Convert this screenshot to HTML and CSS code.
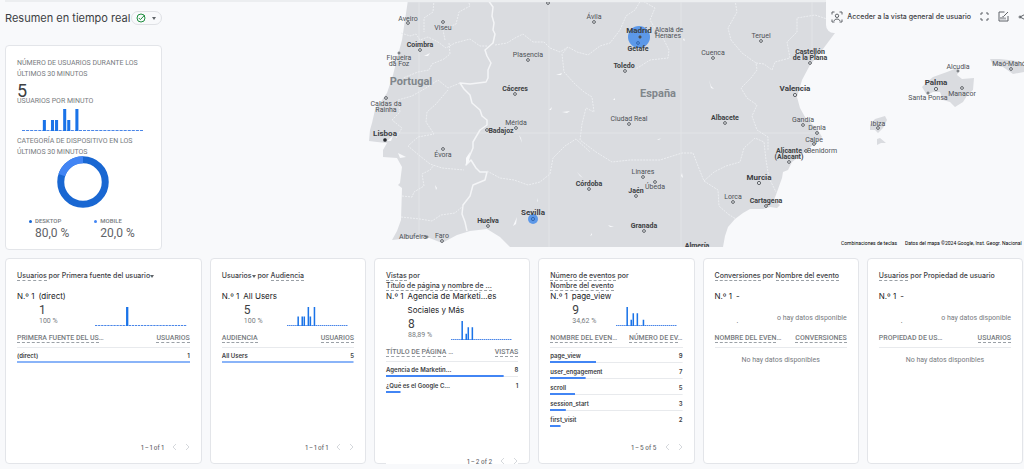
FILE: index.html
```html
<!DOCTYPE html>
<html lang="es">
<head>
  <meta charset="UTF-8">
  <meta name="viewport" content="width=device-width, initial-scale=1.0">
  <title>Resumen en tiempo real</title>
  <link rel="stylesheet" href="styles.css">
</head>
<body>
  <!-- Mapa y resumen -->
  <section class="hero">
    <svg class="map" viewBox="0 0 1024 247" preserveAspectRatio="xMaxYMin slice" role="img" aria-label="Mapa de usuarios">
      <g class="land">
        <path d="M408 0L405 20 402 40 398 55 393 75 387 93 375 110 372 123 370 130 369 141 377 142 387 143 383 150 383 157 397 158 402 167 400 183 398 185 402 188 401 220 397 231 392 240 410 238 427 237 442 243 457 235 470 231 487 229 500 237 510 247H723L725 236 728 227 735 219 743 213 750 209 763 209 770 207 777 208 780 205 774 200 777 192 782 178 783 172 788 170 792 162 805 152 813 145 822 137 818 130 810 122 805 117 800 108 797 97 802 80 810 65 820 53 835 33 850 0Z"/>
        <path d="M922 87L926 83 933 77 947 72 957 68 959 71 957 75 962 79 974 78 973 90 968 94 963 102 955 107 950 102 943 100 940 92 933 92 927 95Z"/>
        <path d="M990 59L1000 59 1017 61 1024 65V72L1013 74 1003 67 993 65Z"/>
        <path d="M870 125L875 119 885 116 887 120 883 128 878 133 875 130 870 130Z"/>
        <path d="M877 139L880 138 886 143 881 143 877 145Z"/>
      </g>
      <g class="grid">
        <path d="M419 0V238M549 0V247M681 0V247M812 0V60M380 133H820M408 2H825"/>
      </g>
      <path class="border" d="M488 0L493 7 492 16 494 23 493 30 495 34 493 43 485 50 487 56 491 63 488 70 488 78 486 82 470 84 460 83 464 89 470 95 472 103 480 110 482 116 487 120 487 125 480 130 473 142 473 148 470 155 466 165 471 160 476 168 480 172 487 172 485 180 473 185 470 196 463 205 462 214 465 222 467 231"/>
      <g class="region">
        <path d="M401 33L410 36 416 34 420 40 428 37 438 42 446 48 455 43 470 39 480 46 487 46"/>
        <path d="M434 0L433 12 424 18 424 32M468 0L470 6 459 12 456 24 443 30 445 40"/>
        <path d="M449 43L450 54 444 59 432 64 429 70 418 72 403 78"/>
        <path d="M460 83L448 88 438 80 426 88 412 96 398 100 400 112 392 120 402 128 396 138"/>
        <path d="M448 90L436 104 427 112 426 122 434 134 418 137 408 146 420 156 430 164 442 168 464 170"/>
        <path d="M402 196L412 197 414 192 424 186 422 174 430 170 434 165"/>
        <path d="M401 217L420 219 432 221 441 215 455 213 463 206"/>
        <path d="M495 45L507 43 515 38 523 34 533 42 544 42 550 48 560 52 568 47 577 52 588 55 600 46 610 43 620 30 626 16 635 10 641 0"/>
        <path d="M641 0L655 8 650 20 656 30 664 40 669 50 668 58 650 60 636 69"/>
        <path d="M568 47L562 54 564 72 575 84 584 92 592 97 594 112 586 108 582 124 580 140 596 152 612 162 630 160 660 160 682 153 693 153 698 166 704 181"/>
        <path d="M487 171L500 178 514 180 528 185 540 182 550 174 553 158 565 146 576 139 590 152"/>
        <path d="M735 0L737 12 728 28 731 40 742 53 756 63 757 70 751 78 741 88 747 98 757 105 752 116 757 130 768 137 768 150"/>
        <path d="M756 63L764 64 772 70 775 62 790 58 787 42 797 32 797 18 815 15 830 20"/>
        <path d="M704 181L714 172 726 166 740 162 744 148 755 138 764 142 766 160 769 178 776 192"/>
        <path d="M704 181L718 190 719 206 728 214 736 219"/>
      </g>
      <g class="water">
        <path d="M556 75l6-2-1 2zM549 110l3-3-1 3zM519 135l3 8-1-5zM562 112l8-1-3 2zM709 80l2 6 3 3-3-1zM466 158l4-6-1 9-3 4zM387 141l6-5-2 5zM398 153l8 4-6 1zM613 100l2-2 0 2zM682 173l1 5-2-2zM608 225l6 2-4 0zM590 236l2-3 0 2zM424 56l6-3-2 3zM435 185l2 3-1 2zM537 198l1 4-1-1zM513 226l4-9-1 7zM577 172l6 6-3-2zM657 140l4-2-2 2zM684 38l1 3-2-1zM795 104l1 3z"/>
      </g>
      <circle class="hit" cx="639" cy="37" r="11"/>
      <circle class="hit" cx="533" cy="219" r="5"/>
      <g class="dots">
        <circle cx="408" cy="23" r="1.4"/><circle cx="443" cy="22" r="1.4"/><circle cx="420" cy="50" r="1.4"/>
        <circle cx="399" cy="53" r="1"/><circle cx="386" cy="98" r="1.4"/><circle cx="548" cy="3" r="1.4"/>
        <circle cx="528" cy="60" r="1.4"/><circle cx="515" cy="94" r="1.4"/><circle cx="516" cy="128" r="1.4"/>
        <circle cx="487" cy="130" r="1.4"/><circle cx="443" cy="149" r="1.4"/><circle cx="488" cy="226" r="1.4"/>
        <circle cx="442" cy="241" r="1.4"/><circle cx="427" cy="237" r="1"/><circle class="over" cx="533" cy="219" r="1.6"/>
        <circle cx="589" cy="189" r="1.4"/><circle cx="594" cy="22" r="1.4"/><circle class="over" cx="638" cy="43" r="1.4"/>
        <circle cx="656" cy="33" r="1"/><circle cx="625" cy="71" r="1.4"/><circle cx="713" cy="58" r="1.4"/>
        <circle cx="761" cy="41" r="1.4"/><circle cx="810" cy="63" r="1.4"/><circle cx="795" cy="95" r="1.6"/>
        <circle cx="629" cy="124" r="1.4"/><circle cx="725" cy="123" r="1.4"/><circle cx="803" cy="125" r="1.4"/>
        <circle cx="817" cy="133" r="1.4"/><circle cx="814" cy="144" r="1.4"/><circle cx="806" cy="151" r="1.4"/>
        <circle cx="789" cy="162" r="1.4"/><circle cx="759" cy="183" r="1.6"/><circle cx="643" cy="177" r="1.4"/>
        <circle cx="655" cy="182" r="1.4"/><circle cx="636" cy="196" r="1.4"/><circle cx="644" cy="231" r="1.4"/>
        <circle cx="733" cy="202" r="1.4"/><circle cx="766" cy="206" r="1.4"/><circle cx="936" cy="89" r="1.6"/>
        <circle cx="928" cy="93" r="1"/><circle cx="962" cy="88" r="1.4"/><circle cx="958" cy="71" r="1"/>
        <circle cx="1011" cy="69" r="1.4"/><circle cx="878" cy="128" r="1.4"/>
        <circle class="capital" cx="385" cy="140" r="1.6"/><circle class="capital" cx="640" cy="37" r="1.2"/>
      </g>
      <g class="town">
        <text x="408" y="21">Aveiro</text><text x="443" y="30">Viseu</text>
        <text x="399" y="60">Figueira</text><text x="399" y="66">da Foz</text>
        <text x="386" y="106">Caldas da</text><text x="386" y="112">Rainha</text>
        <text x="528" y="57">Plasencia</text><text x="516" y="125">Mérida</text>
        <text x="443" y="157">Évora</text><text x="413" y="239">Albufeira</text><text x="442" y="238">Faro</text>
        <text x="594" y="19">Ávila</text><text x="669" y="32">Alcalá de</text><text x="668" y="38">Henares</text>
        <text x="713" y="55">Cuenca</text><text x="761" y="38">Teruel</text><text x="629" y="121">Ciudad Real</text>
        <text x="803" y="122">Gandía</text><text x="817" y="130">Denia</text><text x="814" y="142">Calpe</text>
        <text x="822" y="153">Benidorm</text><text x="643" y="174">Linares</text><text x="655" y="189">Úbeda</text>
        <text x="733" y="199">Lorca</text><text x="928" y="100">Santa Ponsa</text><text x="962" y="96">Manacor</text>
        <text x="958" y="69">Alcudia</text><text x="1011" y="66">Maó-Mahón</text><text x="878" y="126">Ibiza</text>
      </g>
      <g class="city">
        <text x="420" y="47">Coimbra</text><text x="515" y="91">Cáceres</text><text x="501" y="133">Badajoz</text>
        <text x="488" y="223">Huelva</text><text x="589" y="186">Córdoba</text><text x="638" y="51">Getafe</text>
        <text x="624" y="68">Toledo</text><text x="810" y="54">Castellón</text><text x="810" y="60">de la Plana</text>
        <text x="725" y="120">Albacete</text><text x="789" y="153">Alicante</text><text x="789" y="159">(Alacant)</text>
        <text x="636" y="193">Jaén</text><text x="644" y="228">Granada</text><text x="766" y="203">Cartagena</text>
        <text x="697" y="248">Almería</text>
      </g>
      <g class="metro">
        <text x="385" y="136">Lisboa</text><text x="639" y="33">Madrid</text><text x="533" y="215">Sevilla</text>
        <text x="795" y="91">Valencia</text><text x="759" y="180">Murcia</text><text x="936" y="85">Palma</text>
      </g>
      <g class="country">
        <text x="411" y="85">Portugal</text><text x="658" y="97">España</text>
      </g>
      <g class="credits">
        <text x="841" y="245">Combinaciones de teclas</text>
        <text x="905" y="245">Datos del mapa ©2024 Google, Inst. Geogr. Nacional</text>
      </g>
    </svg>

    <header class="topbar">
      <div class="heading">
        <h1>Resumen en tiempo real</h1>
        <button class="status" aria-label="Calidad de los datos">
          <svg width="10" height="10" viewBox="0 0 10 10"><circle cx="5" cy="5" r="4" /><path d="M2.8 5l1.6 1.6L8.6 2.2"/></svg>
          <span class="caret"></span>
        </button>
      </div>
      <div class="tools">
        <button class="snapshot">
          <svg width="12" height="12" viewBox="0 0 12 12"><path d="M1 3.500V1h2.500M8.500 1H11v2.500M11 8.500V11H8.500M3.500 11H1V8.500M3 10c.6-2.600 5.400-2.600 6 0"/><circle cx="6" cy="4.800" r="1.700"/></svg>
          Acceder a la vista general de usuario
        </button>
        <button aria-label="Pantalla completa">
          <svg width="9" height="9" viewBox="0 0 9 9"><path d="M1 3V1h2M6 1h2v2M8 6v2H6M3 8H1V6"/></svg>
        </button>
        <button aria-label="Editar comparaciones">
          <svg width="11" height="11" viewBox="0 0 11 11"><path d="M6.500 1H1v9h9V5M3 8.500V6M5 8.500V5M7 8.500V6.500M5.500 5.500L10 1"/></svg>
        </button>
        <button aria-label="Compartir">
          <svg width="10" height="10" viewBox="0 0 10 10"><path d="M8 1.800L2 5l6 3.200"/><circle cx="2" cy="5" r="1"/><circle cx="8" cy="1.800" r="1"/><circle cx="8" cy="8.200" r="1"/></svg>
        </button>
      </div>
    </header>

    <article class="card summary">
      <h2>Número de usuarios durante los últimos 30 minutos</h2>
      <p class="total">5</p>
      <h2 class="per-minute">Usuarios por minuto</h2>
      <svg class="minutes" viewBox="0 0 120 20" preserveAspectRatio="none">
        <path class="base" d="M0 19.500H120"/>
        <path class="bars" d="M22 20V10M30 20V10M34 20V10M42 20V0M46 20V10M54 20V0"/>
      </svg>
      <h2>Categoría de dispositivo en los últimos 30 minutos</h2>
      <svg class="donut" width="52" height="52" viewBox="0 0 52 52">
        <circle cx="26" cy="26" r="22.250" stroke="#1967d2"/>
        <circle cx="26" cy="26" r="22.250" stroke="#4285f4" pathLength="100" stroke-dasharray="20 80" stroke-dashoffset="-80" transform="rotate(-90 26 26)"/>
      </svg>
      <dl class="legend">
        <div><dt>Desktop</dt><dd>80,0 %</dd></div>
        <div class="mobile"><dt>Mobile</dt><dd>20,0 %</dd></div>
      </dl>
    </article>
  </section>

  <!-- Tarjetas -->
  <main class="cards">
    <article class="card report">
      <h3><span class="term">Usuarios</span> por <button>Primera fuente del usuario<span class="caret"></span></button></h3>
      <div class="rank"><span>N.º 1</span><span>(direct)</span></div>
      <div class="figure">
        <p class="value">1<small>100 %</small></p>
        <svg class="spark wide" viewBox="0 0 120 18" preserveAspectRatio="none">
          <path class="base" d="M0 17.500H120"/><path class="bars" d="M42 18V0"/>
        </svg>
      </div>
      <div class="data">
        <table>
          <thead><tr><th><span class="term">Primera fuente del us</span>…</th><th><span class="term">Usuarios</span></th></tr></thead>
          <tbody><tr class="soft" style="--w: 100%"><td>(direct)</td><td>1</td></tr></tbody>
        </table>
      </div>
      <div class="pager">1 – 1 of 1 <button aria-label="Anterior" disabled><svg width="5" height="8" viewBox="0 0 5 8"><path d="M4 1L1 4l3 3"/></svg></button><button aria-label="Siguiente" disabled><svg width="5" height="8" viewBox="0 0 5 8"><path d="M1 1l3 3-3 3"/></svg></button></div>
    </article>

    <article class="card report">
      <h3><button>Usuarios<span class="caret"></span></button> por <span class="term">Audiencia</span></h3>
      <div class="rank"><span>N.º 1</span><span>All Users</span></div>
      <div class="figure">
        <p class="value">5<small>100 %</small></p>
        <svg class="spark" viewBox="0 0 120 18" preserveAspectRatio="none">
          <path class="base" d="M0 17.500H120"/><path class="bars" d="M22 18V9M30 18V9M34 18V9M42 18V0M46 18V9M54 18V0"/>
        </svg>
      </div>
      <div class="data">
        <table>
          <thead><tr><th><span class="term">Audiencia</span></th><th><span class="term">Usuarios</span></th></tr></thead>
          <tbody><tr class="soft" style="--w: 100%"><td>All Users</td><td>5</td></tr></tbody>
        </table>
      </div>
      <div class="pager">1 – 1 of 1 <button aria-label="Anterior" disabled><svg width="5" height="8" viewBox="0 0 5 8"><path d="M4 1L1 4l3 3"/></svg></button><button aria-label="Siguiente" disabled><svg width="5" height="8" viewBox="0 0 5 8"><path d="M1 1l3 3-3 3"/></svg></button></div>
    </article>

    <article class="card report">
      <h3><span class="term">Vistas</span> por<br><span class="term">Título de página y nombre de …</span></h3>
      <div class="rank"><span>N.º 1</span><span>Agencia de Marketi...es<br>Sociales y Más</span></div>
      <div class="figure">
        <p class="value">8<small>88,89 %</small></p>
        <svg class="spark" viewBox="0 0 120 18" preserveAspectRatio="none">
          <path class="base" d="M0 17.500H120"/><path class="bars" d="M22 18V0M30 18V12M34 18V6M42 18V6"/>
        </svg>
      </div>
      <div class="data">
        <table>
          <thead><tr><th><span class="term">Título de página</span> …</th><th><span class="term">Vistas</span></th></tr></thead>
          <tbody>
            <tr style="--w: 89%"><td>Agencia de Marketin…</td><td>8</td></tr>
            <tr style="--w: 11%"><td>¿Qué es el Google C…</td><td>1</td></tr>
          </tbody>
        </table>
      </div>
      <div class="pager">1 – 2 of 2 <button aria-label="Anterior" disabled><svg width="5" height="8" viewBox="0 0 5 8"><path d="M4 1L1 4l3 3"/></svg></button><button aria-label="Siguiente" disabled><svg width="5" height="8" viewBox="0 0 5 8"><path d="M1 1l3 3-3 3"/></svg></button></div>
    </article>

    <article class="card report">
      <h3><span class="term">Número de eventos</span> por<br><span class="term">Nombre del evento</span></h3>
      <div class="rank"><span>N.º 1</span><span>page_view</span></div>
      <div class="figure">
        <p class="value">9<small>34,62 %</small></p>
        <svg class="spark" viewBox="0 0 120 18" preserveAspectRatio="none">
          <path class="base" d="M0 17.500H120"/><path class="bars" d="M22 18V0M30 18V12M34 18V6M42 18V6M54 18V12"/>
        </svg>
      </div>
      <div class="data">
        <table>
          <thead><tr><th><span class="term">Nombre del even</span>…</th><th><span class="term">Número de ev</span>…</th></tr></thead>
          <tbody>
            <tr style="--w: 35%"><td>page_view</td><td>9</td></tr>
            <tr style="--w: 27%"><td>user_engagement</td><td>7</td></tr>
            <tr style="--w: 19%"><td>scroll</td><td>5</td></tr>
            <tr style="--w: 12%"><td>session_start</td><td>3</td></tr>
            <tr style="--w: 8%"><td>first_visit</td><td>2</td></tr>
          </tbody>
        </table>
      </div>
      <div class="pager">1 – 5 of 5 <button aria-label="Anterior" disabled><svg width="5" height="8" viewBox="0 0 5 8"><path d="M4 1L1 4l3 3"/></svg></button><button aria-label="Siguiente" disabled><svg width="5" height="8" viewBox="0 0 5 8"><path d="M1 1l3 3-3 3"/></svg></button></div>
    </article>

    <article class="card report">
      <h3><span class="term">Conversiones</span> por <span class="term">Nombre del evento</span></h3>
      <div class="rank"><span>N.º 1</span><span>-</span></div>
      <div class="figure">
        <p class="value">&nbsp;<small class="blank">.</small></p>
        <p class="no-spark">o hay datos disponible</p>
      </div>
      <div class="data">
        <table>
          <thead><tr><th><span class="term">Nombre del even</span>…</th><th><span class="term">Conversiones</span></th></tr></thead>
        </table>
        <p class="empty">No hay datos disponibles</p>
      </div>
    </article>

    <article class="card report">
      <h3><span class="term">Usuarios</span> por Propiedad de usuario</h3>
      <div class="rank"><span>N.º 1</span><span>-</span></div>
      <div class="figure">
        <p class="value">&nbsp;<small class="blank">.</small></p>
        <p class="no-spark">o hay datos disponible</p>
      </div>
      <div class="data">
        <table>
          <thead><tr><th>Propiedad de us…</th><th><span class="term">Usuarios</span></th></tr></thead>
        </table>
        <p class="empty">No hay datos disponibles</p>
      </div>
    </article>
  </main>
</body>
</html>
```
FILE: styles.css
```css
* {
  box-sizing: border-box;
}

body {
  margin: 0;
  background: #f8f9fb;
  color: #5f6368;
  font-family: Roboto, "Liberation Sans", sans-serif;
  font-size: 7px;
  overflow: hidden;
}

h1, h2, h3, p, dl, dd {
  margin: 0;
}

button {
  padding: 0;
  border: 0;
  background: none;
  color: inherit;
  font: inherit;
}

button svg {
  display: block;
  fill: none;
  stroke: #5f6368;
}

.card {
  background: #fff;
  border: 1px solid #e3e5e9;
  border-radius: 4px;
}

.caret {
  display: inline-block;
  border: 2px solid transparent;
  border-top: 3px solid #5f6368;
  border-bottom: 0;
  vertical-align: middle;
}

.base {
  stroke: #4a86e8;
  stroke-dasharray: 3 1;
}

.bars {
  stroke: #1a73e8;
  stroke-width: 3;
}

/* Mapa */
.hero {
  position: relative;
  padding: 0 0 8px 5px;
}

.map {
  position: absolute;
  top: 0;
  right: 0;
  width: 100%;
  height: 247px;
}

.land {
  fill: #dadce0;
}

.grid path {
  fill: none;
  stroke: #e2e4e7;
}

.border {
  fill: none;
  stroke: #f4f5f7;
  stroke-width: 1.5;
  stroke-linejoin: round;
}

.region {
  fill: none;
  stroke: #eceef1;
  stroke-dasharray: 2 1;
}

.water {
  fill: #f8f9fb;
}

.hit {
  fill: #5c98e8;
}

.dots {
  fill: #e8eaed;
  stroke: #5f6368;
}

.dots .capital {
  fill: #202124;
}

.dots .over {
  fill: none;
  stroke: #3367b0;
}

.map text {
  text-anchor: middle;
}

.town {
  font-size: 7px;
  fill: #4d5156;
}

.city {
  font-size: 7px;
  font-weight: 700;
  fill: #3c4043;
}

.metro {
  font-size: 8px;
  font-weight: 700;
  fill: #3c4043;
}

.country {
  font-size: 11px;
  font-weight: 700;
  fill: #80868b;
}

.map .credits text {
  font-size: 5px;
  fill: #000;
  text-anchor: start;
}

/* Cabecera */
.topbar {
  position: relative;
  display: flex;
  justify-content: space-between;
  align-items: flex-start;
  height: 45px;
}

.topbar::before {
  content: "";
  position: absolute;
  inset: 0 0 auto;
  height: 2px;
  background: #eceef0;
}

.heading {
  display: flex;
  align-items: center;
  gap: 1px;
  padding-top: 11px;
}

h1 {
  color: #3c4043;
  font-family: Inter, Roboto, sans-serif;
  font-size: 11px;
  font-weight: 400;
  line-height: 14px;
}

.status {
  display: flex;
  align-items: center;
  gap: 6px;
  height: 14px;
  padding: 0 5px 0 4px;
  border: 1px solid #dfe1e5;
  border-radius: 7px;
}

.status svg {
  stroke: #1e8e3e;
}

.tools {
  position: relative;
  display: flex;
  align-items: center;
  gap: 9px;
  height: 33px;
  margin-right: -4px;
  padding-left: 5px;
  background: #f8f9fb;
  border-bottom-left-radius: 8px;
}

.snapshot {
  display: flex;
  align-items: center;
  gap: 4px;
  color: #3c4043;
  font-family: Inter, Roboto, sans-serif;
  font-weight: 500;
}

/* Resumen */
.summary {
  position: relative;
  width: 157px;
  padding: 12px 12px 9px 11px;
}

h2 {
  margin-right: -4px;
  color: #777b80;
  font-size: 7px;
  font-weight: 400;
  line-height: 11px;
  text-transform: uppercase;
}

.total {
  color: #3c4043;
  font-size: 18px;
  line-height: 22px;
}

.per-minute {
  margin-top: -6px;
}

.minutes {
  display: block;
  width: 122px;
  height: 22px;
  margin: 2px 0 5px 5px;
}

.donut {
  display: block;
  margin: -2px auto 8px;
  fill: none;
  stroke-width: 7;
}

.legend {
  display: flex;
  gap: 31px;
  padding-left: 18px;
}

.legend dt {
  position: relative;
  color: #777b80;
  font-size: 6px;
  font-weight: 500;
  line-height: 10px;
  text-transform: uppercase;
}

.legend dt::before {
  content: "";
  position: absolute;
  top: 4px;
  left: -6px;
  width: 3px;
  height: 3px;
  border-radius: 50%;
  background: #1967d2;
}

.legend .mobile dt::before {
  background: #4285f4;
}

.legend dd {
  color: #5f6368;
  font-size: 12px;
  line-height: 14px;
}

/* Tarjetas */
.cards {
  display: grid;
  grid-template-columns: 1.26fr repeat(5, 1fr);
  grid-auto-rows: 206px;
  gap: 8px;
  padding: 0 1px 0 5px;
}

.report {
  min-width: 0;
  padding: 12px 11px 0;
}

h3 {
  height: 18px;
  color: #3c4043;
  font-family: Inter, Roboto, sans-serif;
  font-size: 7px;
  font-weight: 500;
  line-height: 10px;
  white-space: nowrap;
}

.term {
  border-bottom: 1px dashed #9aa0a6;
}

.rank {
  display: flex;
  gap: 4px;
  color: #202124;
  font-family: Inter, Roboto, sans-serif;
  font-size: 8px;
  line-height: 14px;
  white-space: nowrap;
}

.figure {
  display: flex;
  justify-content: space-between;
  height: 23px;
  padding-left: 22px;
}

.value {
  color: #3c4043;
  font-size: 12px;
  line-height: 14px;
}

.value small {
  display: block;
  color: #777b80;
  font-size: 7px;
  line-height: 8px;
}

.value .blank {
  color: #3c4043;
}

.spark {
  width: 61px;
  height: 19px;
  margin: 4px 6px 0 0;
}

.spark.wide {
  width: 92px;
  margin-right: 3px;
}

.no-spark {
  padding-top: 10px;
  color: #777b80;
  line-height: 10px;
  white-space: nowrap;
}

.data {
  min-height: 113px;
}

table {
  width: 100%;
  border-collapse: collapse;
}

th, td {
  height: 16px;
  padding: 0;
  text-align: left;
  white-space: nowrap;
}

th {
  height: 21px;
  padding-top: 3px;
  border-bottom: 1px solid #e8eaed;
  color: #777b80;
  font-size: 7px;
  font-weight: 500;
  text-transform: uppercase;
}

td {
  color: #3c4043;
  font-family: Inter, Roboto, sans-serif;
  font-size: 6px;
  font-weight: 600;
}

th:last-child, td:last-child {
  text-align: right;
}

tbody tr {
  background:
    linear-gradient(#4285f4, #4285f4) no-repeat left bottom / var(--w) 2px,
    linear-gradient(#e8eaed, #e8eaed) no-repeat left bottom / 100% 1px;
}

tbody tr:last-child {
  background: linear-gradient(#4285f4, #4285f4) no-repeat left bottom / var(--w) 2px;
}

tbody tr.soft {
  background: linear-gradient(#8ab4f8, #8ab4f8) no-repeat left bottom / var(--w) 2px;
}

.empty {
  padding-top: 7px;
  color: #777b80;
  line-height: 10px;
  text-align: center;
}

.pager {
  display: flex;
  align-items: center;
  justify-content: flex-end;
  gap: 8px;
  height: 16px;
  background: #fff;
  font-family: Inter, Roboto, sans-serif;
  font-size: 6px;
  font-weight: 500;
}

.pager svg {
  stroke: #d5d8dc;
}
```
